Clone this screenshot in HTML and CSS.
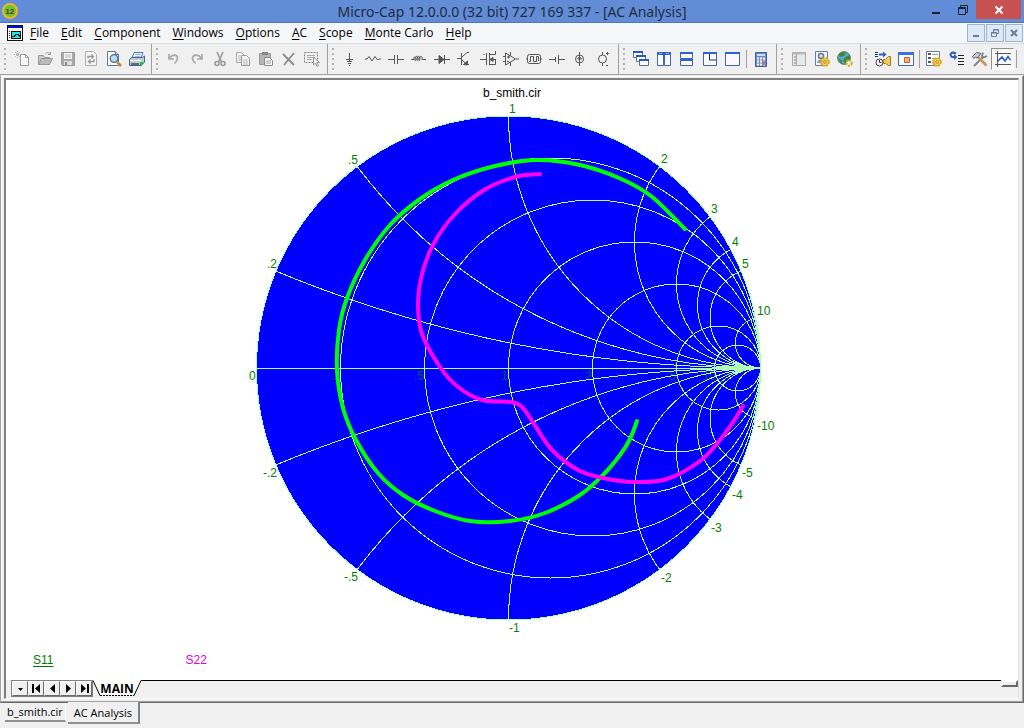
FILE: index.html
```html
<!DOCTYPE html>
<html lang="en">
<head>
<meta charset="utf-8">
<title>Micro-Cap 12.0.0.0 (32 bit) 727 169 337 - [AC Analysis]</title>
<link rel="stylesheet" href="styles.css">
</head>
<body>
<div class="app">
  <header class="titlebar">
    <svg class="app-logo" viewBox="0 0 16 16" aria-hidden="true"><circle cx="8" cy="8" r="7" fill="#5fc832" stroke="#f0b428" stroke-width="2"/><text x="8" y="11" text-anchor="middle" class="logo-text">12</text></svg>
    <h1 class="title">Micro-Cap 12.0.0.0 (32 bit) 727 169 337 - [AC Analysis]</h1>
    <div class="caption">
      <button class="cap-btn" aria-label="Minimize"><svg width="12" height="12" viewBox="0 0 12 12"><path d="M2 9h8" stroke="#1c2430" stroke-width="2"/></svg></button>
      <button class="cap-btn" aria-label="Restore"><svg width="12" height="12" viewBox="0 0 12 12" fill="none" stroke="#1c2430"><path d="M1.5 3.500h7v7h-7z M1.500 4.500h7 M3.500 3v-1.500h7v7h-1.500"/></svg></button>
      <button class="cap-btn cap-close" aria-label="Close"><svg width="10" height="10" viewBox="0 0 10 10"><path d="M1.500 1.500l7 7M8.500 1.500l-7 7" stroke="#fff" stroke-width="2"/></svg></button>
    </div>
  </header>

  <nav class="menubar" aria-label="Main menu">
    <svg class="doc-icon" viewBox="0 0 16 16" shape-rendering="crispEdges" aria-hidden="true"><path d="M0 0h16v16H0z" fill="#111"/><path d="M1 3h14v12H1z" fill="#fff"/><path d="M1 1h14v2H1z" fill="#0010d0"/><path d="M2 6h1M2 8h1M2 10h1M2 12h1" stroke="#333"/><path d="M4 6h10v8H4z" fill="#111"/><path d="M5 7h8v6H5z" fill="#20e8e8"/><path d="M5 11h2v-1h1v-1h3v1h1v1h1" fill="none" stroke="#111"/></svg>
    <button class="menu"><u>F</u>ile</button>
    <button class="menu"><u>E</u>dit</button>
    <button class="menu"><u>C</u>omponent</button>
    <button class="menu"><u>W</u>indows</button>
    <button class="menu"><u>O</u>ptions</button>
    <button class="menu"><u>A</u>C</button>
    <button class="menu"><u>S</u>cope</button>
    <button class="menu"><u>M</u>onte Carlo</button>
    <button class="menu"><u>H</u>elp</button>
    <div class="mdi-controls">
      <button class="mdi" aria-label="Minimize document"><svg width="10" height="10" viewBox="0 0 10 10"><path d="M2 8h6" stroke="#6a7d93" stroke-width="2"/></svg></button>
      <button class="mdi" aria-label="Restore document"><svg width="10" height="10" viewBox="0 0 10 10" fill="none" stroke="#6a7d93"><path d="M1.500 4.500h5v4h-5zM1 5h6M3.500 4V1.500h5v4H7M3 2h6"/></svg></button>
      <button class="mdi" aria-label="Close document"><svg width="10" height="10" viewBox="0 0 10 10"><path d="M2 2l6 6M8 2L2 8" stroke="#6a7d93" stroke-width="2"/></svg></button>
    </div>
  </nav>

  <div class="toolbar" role="toolbar" aria-label="Tools">
    <div class="group">
      <span class="grip"></span>
      <button class="tool" aria-label="New"><svg viewBox="0 0 16 16"><path d="M6.500 3.500h5l3 3v8h-8z" fill="#fafafa" stroke="#999"/><path d="M11.500 3.500v3h3" fill="none" stroke="#999"/><path d="M3.500 0v7M0 3.500h7M1 1l5 5M6 1L1 6" stroke="#aaa" stroke-dasharray="1 1"/></svg></button>
      <button class="tool" aria-label="Open"><svg viewBox="0 0 16 16"><path d="M1.500 13.500v-9h5l1 2h5v7z" fill="#ccc" stroke="#999"/><path d="M1.500 13.500l3-6h11l-3 6z" fill="#bcbcbc" stroke="#999"/><path d="M8 3c2-2 4-2 5 0M13.500 1v2.500H11" fill="none" stroke="#999"/></svg></button>
      <button class="tool" aria-label="Save"><svg viewBox="0 0 16 16"><path d="M1.500 1.500h13v13h-12l-1-1z" fill="#aaa" stroke="#999"/><path d="M4 2h8v6H4z" fill="#f4f4f4"/><path d="M4 10h8v4H4z" fill="#ddd"/><path d="M5 11h2v3H5z" fill="#888"/><path d="M5 4h6M5 6h6" stroke="#bbb"/></svg></button>
      <button class="tool" aria-label="Revert"><svg viewBox="0 0 16 16"><path d="M2.500.500h8l3 3v11h-11z" fill="#f4f4f4" stroke="#b0b0b0"/><path d="M5 7.500V5.500h5M8.500 3.500l2 2-2 2M11 8v2.500H6M7.500 8.500l-2 2 2 2" fill="none" stroke="#999" stroke-width="1.300"/></svg></button>
      <button class="tool" aria-label="Print preview"><svg viewBox="0 0 16 16"><path d="M1.500.500h8l3 3v11h-11z" fill="#fff" stroke="#5878a8"/><path d="M9.500.500v3h3" fill="#cde" stroke="#5878a8"/><circle cx="8" cy="7.500" r="3.800" fill="#b8dcf4" stroke="#526a88" stroke-width="1.300"/><path d="M11 11l4 4" stroke="#d0862c" stroke-width="2.500"/></svg></button>
      <button class="tool" aria-label="Print"><svg viewBox="0 0 16 16"><path d="M5 1.500h9l-2 6H3z" fill="#f4f9ff" stroke="#4c77b0"/><path d="M6 3.500h6M5.500 5.500h6" stroke="#9bbbe0"/><path d="M.500 8.500l2-2h11l2-1.500v6l-3 3.500H.500z" fill="#c0cbd8" stroke="#46658c"/><path d="M1 9.500h11" stroke="#fff"/><path d="M2 13h8" stroke="#404858" stroke-width="1.500"/><path d="M11 11h3v3h-3z" fill="#25c432"/></svg></button>
    </div>
    <div class="group">
      <span class="grip"></span>
      <button class="tool" aria-label="Undo"><svg viewBox="0 0 16 16"><path d="M3 3v5h5M3.500 7.500c3-5 8-4 8 0 0 2-1 3-3 5" fill="none" stroke="#aaa" stroke-width="1.700"/></svg></button>
      <button class="tool" aria-label="Redo"><svg viewBox="0 0 16 16"><path d="M13 3v5H8M12.500 7.500c-3-5-9-4-9 0 0 2 1 3 3 5" fill="none" stroke="#aaa" stroke-width="1.700"/></svg></button>
      <button class="tool" aria-label="Cut"><svg viewBox="0 0 16 16" fill="none" stroke="#999"><path d="M5 1l4.500 10M11 1L6.500 11" stroke-width="1.600"/><circle cx="5" cy="12.500" r="2" stroke-width="1.500"/><circle cx="11" cy="12.500" r="2" stroke-width="1.500"/></svg></button>
      <button class="tool" aria-label="Copy"><svg viewBox="0 0 16 16"><path d="M1.500 1.500h5l3 3v7h-8z" fill="#f4f4f4" stroke="#aaa"/><path d="M6.500 4.500h5l3 3v7h-8z" fill="#f4f4f4" stroke="#999"/><path d="M3 5h3M3 7h3M3 9h3M8 9h5M8 11h5M8 13h5" stroke="#bbb"/></svg></button>
      <button class="tool" aria-label="Paste"><svg viewBox="0 0 16 16"><path d="M1.500 2.500h11v11h-11z" fill="#b5b5b5" stroke="#999"/><path d="M4 1h6v3H4z" fill="#888"/><path d="M6.500 6.500h5l3 3v5h-8z" fill="#f4f4f4" stroke="#888"/><path d="M8 10h5M8 12h5" stroke="#aaa"/></svg></button>
      <button class="tool" aria-label="Delete"><svg viewBox="0 0 16 16"><path d="M2 3l11 11M13 2L3 14" stroke="#8c8c8c" stroke-width="1.800"/></svg></button>
      <button class="tool" aria-label="Select mode"><svg viewBox="0 0 16 16"><path d="M.500 1.500h13v10H.500z" fill="none" stroke="#888" stroke-dasharray="2 1"/><path d="M3 4.500h8M3 6.500h8M3 8.500h5" stroke="#aaa"/><path d="M9.500 6v8l2-2 1.500 3.500 1.500-.700L13 11.500h2.500z" fill="#f2f2f2" stroke="#999"/></svg></button>
    </div>
    <div class="group parts">
      <span class="grip"></span>
      <button class="tool" aria-label="Ground"><svg viewBox="0 0 16 16"><path d="M7.500 2v8M4 8.500h7M5 10.500h5M6 12.500h3M7 14.500h1"/></svg></button>
      <button class="tool" aria-label="Resistor"><svg viewBox="0 0 16 16"><path d="M0 8h2l2-2.500 3 4.500 3-4.500 2.500 3.500 1-1H16"/></svg></button>
      <button class="tool" aria-label="Capacitor"><svg viewBox="0 0 16 16"><path d="M0 8.500h6M6.500 4v9M9.500 4v9M10 8.500h6"/></svg></button>
      <button class="tool" aria-label="Inductor"><svg viewBox="0 0 16 16"><path d="M0 8.500h3c-1-3 2-3.500 2-1 0 2-1 3-1 1 0-4 3-4 3-1 0 2-1 3-1 1 0-4 3-4 3-1 0 2-1 3-1 1 0-4 4-4 3 0h4"/></svg></button>
      <button class="tool" aria-label="Diode"><svg viewBox="0 0 16 16"><path d="M0 8.500h16M10.500 4v9"/><path d="M5 4.500l5 4-5 4z" fill="#555"/></svg></button>
      <button class="tool" aria-label="NPN transistor"><svg viewBox="0 0 16 16"><path d="M0 7.500h4M4.500 2v12M5 6l5-4.500h2M5 9l5 4.500h2"/><path d="M10.500 14V10L6.500 13.500z" fill="#555"/></svg></button>
      <button class="tool" aria-label="NMOS transistor"><svg viewBox="0 0 16 16"><path d="M0 8.500h6M6.500 2v12M9.500 2v12M10 3.500h5.500V0M10 8.500h5.500M10 13.500h5.500V8M4 3v1"/><path d="M10 8.500l3-2v4z" fill="#555"/></svg></button>
      <button class="tool" aria-label="Op amp"><svg viewBox="0 0 16 16"><path d="M2.500 2v12l10-6zM0 5.500h2M0 10.500h2M13 8h3M7.500 1v4M7.500 11v4M4 6h3M5.500 4.500v3M4 10.500h2"/></svg></button>
      <button class="tool" aria-label="Pulse source"><svg viewBox="0 0 16 16"><rect x="1.500" y="3.500" width="13" height="9" rx="2"/><path d="M3 10.500h1.500v-5h3v5h3v-5h2V10M0 8h1M15 8h1"/></svg></button>
      <button class="tool" aria-label="Battery"><svg viewBox="0 0 16 16"><path d="M0 8.500h6M6.500 6v5M9.500 4v9M10 8.500h6"/></svg></button>
      <button class="tool" aria-label="Current source"><svg viewBox="0 0 16 16"><circle cx="7.500" cy="8" r="4"/><path d="M7.500 1v14M5.500 8l2-2.500 2 2.500z"/></svg></button>
      <button class="tool" aria-label="Voltage source"><svg viewBox="0 0 16 16"><circle cx="7.500" cy="8" r="4"/><path d="M7.500 1v3M7.500 12v3M11 2.500h3M12.500 1v3M11 14.500h2"/></svg></button>
    </div>
    <div class="group">
      <span class="grip"></span>
      <button class="tool" aria-label="Cascade"><svg viewBox="0 0 16 16" fill="#fff" stroke="#5a6f96"><path d="M.500.500h9v6h-9z"/><path d="M0 1h10" stroke="#2459c8" stroke-width="2"/><path d="M3.500 4.500h9v6h-9z"/><path d="M3 5h10" stroke="#2459c8" stroke-width="2"/><path d="M6.500 8.500h9v6h-9z"/><path d="M6 9h10" stroke="#2459c8" stroke-width="2"/></svg></button>
      <button class="tool" aria-label="Tile vertical"><svg viewBox="0 0 16 16" fill="#f8faff" stroke="#4667a5"><path d="M1.500 1.500h6v13h-6zM8.500 1.500h6v13h-6z"/><path d="M1 2.500h14" stroke="#2e63d2" stroke-width="3"/><path d="M3 2.500h3M10 2.500h3" stroke="#8db2f2"/></svg></button>
      <button class="tool" aria-label="Tile horizontal"><svg viewBox="0 0 16 16" fill="#f8faff" stroke="#4667a5"><path d="M1.500 1.500h12v6h-12zM1.500 8.500h12v6h-12z"/><path d="M1 2h13M1 9h13" stroke="#2e63d2" stroke-width="2"/></svg></button>
      <button class="tool" aria-label="Overlap"><svg viewBox="0 0 16 16" fill="#f8faff" stroke="#4667a5"><path d="M1.500 1.500h13v13h-13z"/><path d="M7.500 2v7h7" stroke="#234"/><path d="M1 2h14" stroke="#2e63d2" stroke-width="2"/></svg></button>
      <button class="tool" aria-label="Maximize"><svg viewBox="0 0 16 16" fill="#f8faff" stroke="#4667a5"><path d="M.500 1.500h14v13H.500z"/><path d="M0 2h15" stroke="#2e63d2" stroke-width="2"/></svg></button>
      <span class="thin"></span>
      <button class="tool" aria-label="Calculator"><svg viewBox="0 0 16 16"><path d="M2.500 1.500h11v14h-11z" fill="#6b8ac8" stroke="#4260a0"/><path d="M4 3h8v2H4z" fill="#c4e2ff"/><path d="M4 7.500h8M4 10.500h8M4 13.500h8" stroke="#fff" stroke-width="2" stroke-dasharray="2 1"/><path d="M10 10h2v4h-2z" fill="#d76a72"/></svg></button>
    </div>
    <div class="group">
      <span class="grip"></span>
      <button class="tool" aria-label="Panel"><svg viewBox="0 0 16 16"><path d="M1.500 1.500h13v13h-13z" fill="#e9e9e9" stroke="#aaa"/><path d="M2 2.500h12" stroke="#bbb" stroke-width="2"/><path d="M5.500 3v12" stroke="#aaa"/><path d="M3 6h2M3 9h2M3 12h2" stroke="#888"/></svg></button>
      <button class="tool" aria-label="User settings"><svg viewBox="0 0 16 16"><path d="M1.500.500h12v14h-12z" fill="#f2f5f9" stroke="#6880a0"/><circle cx="7" cy="5" r="2.500" fill="#dce4ee" stroke="#6a7a90" stroke-width="1.500"/><path d="M3 12c0-5 8-5 8 0" fill="#8aa2c4"/><circle cx="11" cy="11" r="3.800" fill="#f4c944" stroke="#d8a520" stroke-width="2.200" stroke-dasharray="2 1"/><circle cx="11" cy="11" r="3" fill="#f4c944"/><circle cx="11" cy="11" r="1.300" fill="#fff" stroke="#b98512"/></svg></button>
      <button class="tool" aria-label="Web settings"><svg viewBox="0 0 16 16"><circle cx="7" cy="7" r="6.300" fill="#64a2d2" stroke="#447048"/><path d="M2 3l4-2 3 1-2 3-4 1zM8 6l5-2v5l-4 4-3-3zM1 8l4 1v4z" fill="#368b38"/><circle cx="12" cy="12" r="2.600" fill="#fff" stroke="#d8a526" stroke-width="2.200" stroke-dasharray="2 1"/></svg></button>
    </div>
    <div class="group last">
      <span class="grip"></span>
      <button class="tool" aria-label="Run"><svg viewBox="0 0 16 16"><path d="M0 1.500h3M0 3.500h3M0 5.500h3" stroke="#234"/><path d="M4 3.500h5" stroke="#2464c8" stroke-width="2"/><path d="M8 .500l3.500 3L8 6.500z" fill="#2464c8"/><circle cx="4.500" cy="11.500" r="3.500" fill="#f6f6f6" stroke="#444"/><path d="M4.500 9v2.500h2" fill="none" stroke="#333"/><path d="M8.500 8.500h2l3-3h2v9h-2l-3-2h-2z" fill="#f1c95c" stroke="#a87c20"/></svg></button>
      <button class="tool" aria-label="State variables"><svg viewBox="0 0 16 16"><path d="M.500 1.500h15v13H.500z" fill="#f4f8ff" stroke="#4667a5"/><path d="M0 2.500h16" stroke="#3c70d4" stroke-width="3"/><path d="M6.500 6.500h5v5h-5z" fill="#f7b070" stroke="#bf6042"/></svg></button>
      <span class="thin"></span>
      <button class="tool" aria-label="Analysis limits"><svg viewBox="0 0 16 16"><path d="M.500.500h13v14H.500z" fill="#fff" stroke="#6880a0"/><path d="M2 2h3v2H2zM2 6h3v2H2zM2 10h3v2H2z" fill="#555"/><path d="M6 3.500h6M6 7.500h6M6 11.500h3" stroke="#8aa"/><circle cx="11" cy="11" r="3.800" fill="#f4c944" stroke="#d8a520" stroke-width="2.200" stroke-dasharray="2 1"/><circle cx="11" cy="11" r="3" fill="#f4c944"/><circle cx="11" cy="11" r="1.300" fill="#fff" stroke="#b98512"/></svg></button>
      <button class="tool" aria-label="Stepping"><svg viewBox="0 0 16 16"><path d="M7 2.500C2 0 0 4 3 6h3" fill="none" stroke="#2c62bb" stroke-width="2"/><path d="M5 3l3.500 3L5 9z" fill="#2c62bb"/><path d="M9 4.500h6M9 7.500h6M9 10.500h6M9 13.500h6" stroke="#222"/></svg></button>
      <button class="tool" aria-label="Preferences"><svg viewBox="0 0 16 16"><path d="M2 15l9-9" stroke="#7a8796" stroke-width="2"/><path d="M11 1.500L10 5l1.500 1.500L15 5" fill="none" stroke="#6f7f92" stroke-width="1.700"/><path d="M6 6l8.500 8.500" stroke="#cc9650" stroke-width="2.500"/><path d="M.500 5.500l4-4 4.500 1-4 4.500-1.500-1-1.500 1.500z" fill="#c4ccd6" stroke="#576578"/></svg></button>
      <button class="tool pressed" aria-label="Plot view" aria-pressed="true"><svg viewBox="0 0 16 16"><path d="M2.500 0v16M0 13.500h16M0 2.500h16" stroke="#555"/><path d="M3 10l4-4 3 4 3-4.500 2.500 3.500" fill="none" stroke="#2459c8" stroke-width="1.500"/></svg></button>
      <span class="thin"></span>
      <button class="tool" aria-label="Text cursor"><svg viewBox="0 0 16 16"><path d="M1 3.500h10M1 12.500h10M6.500 3v10" stroke="#444"/></svg></button>
    </div>
  </div>

  <main class="document">
    <div class="sheet">
      <section class="plot">
        <svg class="smith" viewBox="6 80 1012 566" role="img" aria-label="Smith chart of S11 and S22">
          <defs><clipPath id="disc"><circle cx="508.500" cy="368" r="252"/></clipPath></defs>
          <text class="plot-title" x="512" y="97">b_smith.cir</text>
          <circle class="disc" cx="508.500" cy="368" r="252"/>
          <g class="values">
            <text x="341" y="380">.2</text><text x="424" y="380">.5</text><text x="508" y="380">1</text>
            <text x="592" y="380">2</text><text x="676" y="380">5</text><text x="716" y="380">10</text>
          </g>
          <g class="grid" id="grid" clip-path="url(#disc)"></g>
          <circle class="grid" cx="508.500" cy="368" r="252"/>
          <path class="grid" d="M257 368.500H761"/>
          <g class="traces" id="traces"></g>
          <g class="labels">
            <text x="509" y="113">1</text><text x="348" y="164">.5</text><text x="267" y="268">.2</text><text x="249" y="380">0</text>
            <text x="263" y="477">-.2</text><text x="344" y="581">-.5</text><text x="509" y="632">-1</text><text x="661" y="582">-2</text>
            <text x="711" y="532">-3</text><text x="732" y="499">-4</text><text x="742" y="477">-5</text><text x="757" y="430">-10</text>
            <text x="757" y="315">10</text><text x="742" y="268">5</text><text x="732" y="246">4</text><text x="711" y="213">3</text><text x="661" y="163">2</text>
          </g>
        </svg>
        <div class="legend">
          <span class="s11">S11</span>
          <span class="s22">S22</span>
        </div>
      </section>
      <div class="pages">
        <div class="page-nav">
          <button aria-label="Page list"><svg viewBox="0 0 11 11"><path d="M3 5h5L5.500 8z"/></svg></button>
          <button aria-label="First page"><svg viewBox="0 0 11 11"><path d="M1 1h2v9H1zM9 1v9L4 5.500z"/></svg></button>
          <button aria-label="Previous page"><svg viewBox="0 0 11 11"><path d="M8 1v9L3 5.500z"/></svg></button>
          <button aria-label="Next page"><svg viewBox="0 0 11 11"><path d="M3 1v9l5-4.500z"/></svg></button>
          <button aria-label="Last page"><svg viewBox="0 0 11 11"><path d="M2 1v9l5-4.500zM8 1h2v9H8z"/></svg></button>
        </div>
        <button class="page-tab"><svg class="page-shape" viewBox="0 0 48 16" aria-hidden="true"><path d="M0 0h48l-7 15H7z" fill="#fff"/><path d="M7 15.500h34" fill="none" stroke="#000" stroke-dasharray="2 1"/><path d="M0 .500L7 15.500M41 15.500L48 .500" stroke="#000"/></svg><span>MAIN</span></button>
        <span class="page-line"></span>
        <span class="splitter"></span>
      </div>
    </div>
  </main>

  <footer class="windows">
    <button class="win-tab">b_smith.cir</button>
    <button class="win-tab active">AC Analysis</button>
  </footer>
</div>
<script src="chart.js"></script>
</body>
</html>
```

FILE: styles.css
```css
* { box-sizing: border-box; }

body {
  margin: 0;
  background: #f0f0f0;
  color: #000;
  font: 12px/16px "Open Sans", "Noto Sans", sans-serif;
}

button {
  margin: 0;
  padding: 0;
  border: 0;
  background: none;
  color: inherit;
  font: inherit;
}

svg { display: block; }

.app {
  display: flex;
  flex-direction: column;
  min-height: 100vh;
  overflow: hidden;
}

/* Title bar */
.titlebar {
  display: grid;
  grid-template-columns: 104px 1fr 104px;
  height: 23px;
  background: #628cd5;
  border-bottom: 1px solid #5076bb;
}
.app-logo { width: 16px; height: 16px; margin: 3px 2px; }
.logo-text { font: bold 8px "Liberation Sans", sans-serif; fill: #8c1c1c; }
.title {
  margin: 0;
  color: #1e2b40;
  font: 400 14px/23px "Noto Sans", "Open Sans", sans-serif;
  text-align: center;
  white-space: nowrap;
}
.caption { display: flex; justify-content: flex-end; padding-right: 3px; }
.cap-btn { display: flex; align-items: center; justify-content: center; width: 27px; height: 19px; }
.cap-close { width: 45px; background: #c75050; }

/* Menu */
.menubar {
  display: flex;
  align-items: center;
  height: 21px;
  padding: 0 1px 0 7px;
  background: #f5f6f7;
  border-bottom: 1px solid #dcdcdc;
}
.doc-icon { width: 16px; height: 16px; margin-right: 1px; }
.menu { padding: 0 6px; line-height: 18px; white-space: nowrap; }
.menu u { text-decoration: underline 1px; text-underline-offset: 2px; text-decoration-skip-ink: none; }
.mdi-controls { display: flex; gap: 1px; margin-left: auto; }
.mdi {
  display: flex;
  align-items: center;
  justify-content: center;
  width: 18px;
  height: 18px;
  border: 1px solid #9fb4cb;
  background: #dce9f6;
}

/* Toolbar */
.toolbar {
  display: flex;
  height: 31px;
  background: #f0f0f0;
  border-bottom: 1px solid #a0a0a0;
}
.group {
  display: flex;
  flex: none;
  align-items: center;
  padding-right: 4px;
  border-right: 1px solid #a0a0a0;
}
.group:first-child { padding-right: 3px; }
.last { border-right: 0; }
.grip {
  width: 2px;
  height: 22px;
  margin: 0 4px;
  background: repeating-linear-gradient(#b4b4b4 0 2px, transparent 2px 5px);
}
.tool { display: flex; align-items: center; justify-content: center; width: 23px; height: 22px; }
.tool svg { width: 16px; height: 16px; }
.parts svg { fill: none; stroke: #555; }
.thin { width: 1px; height: 18px; margin: 0 2px; background: #a0a0a0; }
.pressed { border: 1px solid; border-color: #909090 #fff #fff #909090; background: #f8f8f8; }

/* Document window */
.document {
  display: flex;
  flex: 1;
  padding: 2px 4px 3px 3px;
  border: 1px solid;
  border-color: #f0f0f0 #696969 #696969 #a0a0a0;
  box-shadow: inset -1px -1px #a0a0a0, inset 1px 1px #fff;
}
.sheet {
  display: flex;
  flex: 1;
  flex-direction: column;
  border: 1px solid;
  border-width: 2px 1px 1px 2px;
  border-color: #808080 #e3e3e3 #fff #808080;
  background: #fff;
}
.plot { display: flex; flex: 1; flex-direction: column; font-family: "Liberation Sans", Arial, sans-serif; }
.smith { width: 100%; }
.smith text { font: 12px "Liberation Sans", Arial, sans-serif; }
.disc { fill: #00f; }
.plot-title { fill: #000; text-anchor: middle; }
.values { fill: #005a64; text-anchor: end; }
.labels { fill: #008000; }
.grid { fill: none; stroke: #b0ffb0; stroke-width: 1; shape-rendering: crispEdges; }
.traces { fill: none; stroke-width: 4; stroke-linejoin: round; stroke-linecap: round; }
.s11-trace { stroke: #0f0; }
.s22-trace { stroke: #f0f; }
.legend { display: flex; gap: 132px; padding: 6px 27px 0; }
.s11 { color: #008000; text-decoration: underline; text-underline-offset: 2px; }
.s22 { color: #e000e0; }

/* Page tabs */
.pages { display: flex; height: 18px; background: #f0f0f0; }
.page-nav { display: flex; margin-left: 5px; border: 1px solid #808080; height: 17px; }
.page-nav button {
  display: flex;
  align-items: center;
  justify-content: center;
  width: 16px;
  border: 1px solid;
  border-color: #fff #696969 #696969 #fff;
}
.page-nav svg { width: 11px; height: 11px; }
.page-tab { position: relative; width: 48px; height: 16px; font-weight: 700; line-height: 15px; }
.page-tab span { position: relative; }
.page-shape { position: absolute; inset: 0; width: 48px; height: 16px; }
.page-line { flex: 1; border-top: 1px solid #000; }
.splitter { width: 17px; height: 7px; border: 2px solid; border-color: #fff #696969 #696969 #fff; }

/* Open windows */
.windows { display: flex; align-items: flex-start; gap: 2px; height: 25px; padding-left: 5px; font-size: 11px; }
.win-tab {
  height: 19px;
  padding: 0 2px;
  border-right: 1px solid #fff;
  border-bottom: 2px solid #909090;
  line-height: 17px;
  white-space: nowrap;
}
.active {
  height: 22px;
  margin-top: -1px;
  padding: 0 6px;
  border-right: 2px solid #808080;
  background: #f0f0f0;
  line-height: 22px;
}
```

FILE: chart.js
```js
const NS = "http://www.w3.org/2000/svg";
const disc = { x: 508.5, y: 368, r: 252 };
const right = disc.x + disc.r;

function add(parent, tag, attrs) {
  const el = document.createElementNS(NS, tag);
  for (const key in attrs) el.setAttribute(key, attrs[key]);
  parent.appendChild(el);
}

// Constant-resistance circles and constant-reactance arcs.
const grid = document.getElementById("grid");
for (const value of [0.2, 0.5, 1, 2, 5, 10]) {
  const r = disc.r / (1 + value);
  add(grid, "circle", { cx: right - r, cy: disc.y, r });
}
for (const value of [0.2, 0.5, 1, 2, 3, 4, 5, 10]) {
  const r = disc.r / value;
  add(grid, "circle", { cx: right, cy: disc.y - r, r });
  add(grid, "circle", { cx: right, cy: disc.y + r, r });
}

// Smooth curve through the samples of each trace.
function curve(p) {
  let d = `M${p[0]}`;
  for (let i = 0; i < p.length - 1; i++) {
    const a = p[i - 1] || p[i], b = p[i], c = p[i + 1], e = p[i + 2] || c;
    d += `C${b[0] + (c[0] - a[0]) / 6},${b[1] + (c[1] - a[1]) / 6} ${c[0] - (e[0] - b[0]) / 6},${c[1] - (e[1] - b[1]) / 6} ${c}`;
  }
  return d;
}

const s11 = [[685,229],[651,196],[619,178],[580,165],[537,160],[495,166],[453,180],[420,199],[390,225],[365,260],[347,298],[339,330],[337,370],[343,408],[356,440],[378,473],[403,495],[435,511],[470,521],[510,521],[545,513],[580,495],[603,475],[620,455],[630,439],[637,421]];
const s22 = [[540,174],[515,177],[484,190],[455,214],[434,243],[422,274],[418,305],[422,334],[440,367],[458,387],[482,400],[510,402],[522,407],[534,424],[552,450],[578,470],[603,478],[634,482],[667,479],[700,461],[719,441],[733,422],[743,406]];
const traces = document.getElementById("traces");
add(traces, "path", { class: "s11-trace", d: curve(s11) });
add(traces, "path", { class: "s22-trace", d: curve(s22) });
```
